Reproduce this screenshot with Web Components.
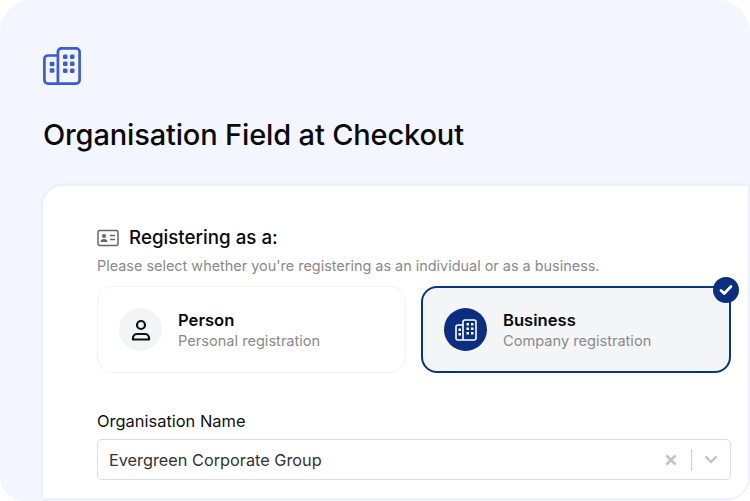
<!DOCTYPE html>
<html><head><meta charset="utf-8"><style>
html,body{margin:0;padding:0;background:#fff;width:750px;height:501px;overflow:hidden}
body{font-family:Inter,"Liberation Sans",sans-serif}
</style></head><body>
<checkout-panel>
  <svg slot="logo" width="38" height="38" viewBox="0 0 38 38" fill="none" stroke="#3b5bdb" stroke-width="2.700" stroke-linejoin="round"><path d="M15 8.500H5a3.600 3.600 0 0 0-3.600 3.600v20.900a3.600 3.600 0 0 0 3.600 3.600h28a3.600 3.600 0 0 0 3.600-3.600V5a3.600 3.600 0 0 0-3.600-3.600H18.500a3.600 3.600 0 0 0-3.600 3.600v31.600"/><g fill="#3b5bdb" stroke="none"><rect x="6.700" y="14.700" width="4.700" height="4.500" rx="1.200"/><rect x="6.700" y="21.300" width="4.700" height="4.500" rx="1.200"/><rect x="20" y="7.500" width="4.500" height="4.500" rx="1.200"/><rect x="27" y="7.500" width="4.500" height="4.500" rx="1.200"/><rect x="20" y="14.500" width="4.500" height="4.500" rx="1.200"/><rect x="27" y="14.500" width="4.500" height="4.500" rx="1.200"/><rect x="20" y="21.500" width="4.500" height="4.500" rx="1.200"/><rect x="27" y="21.500" width="4.500" height="4.500" rx="1.200"/></g></svg>
  <span slot="title">Organisation Field at Checkout</span>
  <registration-form></registration-form>
</checkout-panel>
<script>
const def=(n,html)=>customElements.define(n,class extends HTMLElement{constructor(){super();this.attachShadow({mode:'open'}).innerHTML=html(this)}});
def('checkout-panel',()=>`<style>
:host{display:flex;flex-direction:column;box-sizing:border-box;width:750px;height:501px;background:#f3f6ff;border-radius:32px 32px 24px 24px;padding:47px 2px 3px 43px;overflow:hidden}
.logo{height:38px;display:flex}
h1{margin:30px 0 0;font:500 29px/40px Inter,sans-serif;color:#0a0a0a;letter-spacing:-.15px}
.body{margin-top:31px;flex:1;display:flex;min-height:0}
</style><div class="logo"><slot name="logo"></slot></div><h1><slot name="title"></slot></h1><div class="body"><slot></slot></div>`);
def('registration-form',()=>`<style>
:host{display:block;flex:1;background:#fff;border-radius:20px 0 20px 0;box-shadow:0 0 6px rgba(60,80,160,.08);padding:41px 17px 0 54px;box-sizing:border-box}
.head{display:flex;align-items:center;gap:11px;height:22px}
h2{margin:0;font:500 18.750px/22px Inter,sans-serif;color:#0a0a0a;position:relative;left:-1px}
p{margin:8px 0 0;font:400 14.430px/18px Inter,sans-serif;color:#8a8a8a}
.cards{display:grid;grid-template-columns:309px 310px;gap:15px;margin-top:11px}
label{display:block;margin-top:38px;font:400 16.450px/20px Inter,sans-serif;color:#111}
</style><div class="head"><svg width="22" height="18" viewBox="0 0 22 18" fill="none"><rect x="1" y="1.500" width="20" height="15" rx="2" stroke="#666" stroke-width="1.500"/><circle cx="7" cy="7" r="2" fill="#666"/><path d="M3.500 13c0-2 1.500-3 3.500-3s3.500 1 3.500 3z" fill="#666"/><path d="M13 6.500h5M13 10.500h5" stroke="#666" stroke-width="1.500"/></svg><h2>Registering as a:</h2></div>
<p>Please select whether you're registering as an individual or as a business.</p>
<div class="cards"><choice-card name="Person" sub="Personal registration"></choice-card><choice-card selected name="Business" sub="Company registration"></choice-card></div>
<label>Organisation Name</label><select-field value="Evergreen Corporate Group"></select-field>`);
const person=`<svg width="24" height="24" viewBox="0 0 24 24" fill="none" stroke="#111" stroke-width="2.200"><circle cx="12" cy="7" r="4"/><path d="M4 21.500v-1.500a4 4 0 0 1 4-4h8a4 4 0 0 1 4 4v1.500z" stroke-linejoin="round"/></svg>`;
const biz=`<svg width="24" height="24" viewBox="0 0 24 24" fill="none" stroke="#fff" stroke-width="1.600" stroke-linejoin="round"><path d="M9 7H4a2 2 0 0 0-2 2v11a2 2 0 0 0 2 2h16a2 2 0 0 0 2-2V4a2 2 0 0 0-2-2h-9a2 2 0 0 0-2 2v18"/><g fill="#fff" stroke="none"><rect x="4.500" y="10.500" width="2.500" height="2.500"/><rect x="4.500" y="15" width="2.500" height="2.500"/><rect x="12.500" y="5" width="2.500" height="2.500"/><rect x="17" y="5" width="2.500" height="2.500"/><rect x="12.500" y="9.500" width="2.500" height="2.500"/><rect x="17" y="9.500" width="2.500" height="2.500"/><rect x="12.500" y="14" width="2.500" height="2.500"/><rect x="17" y="14" width="2.500" height="2.500"/></g></svg>`;
customElements.define('choice-card',class extends HTMLElement{constructor(){super();const s=this.hasAttribute('selected');this.attachShadow({mode:'open'}).innerHTML=`<style>
:host{display:flex;position:relative;box-sizing:border-box;height:87px;align-items:center;gap:16px;padding:0 21px;border-radius:16px;background:${s?'#f4f5f7':'#fff'};border:${s?'2px solid #0a3480':'1px solid #f2f3f6'}}
.ic{width:43px;height:43px;border-radius:50%;display:flex;align-items:center;justify-content:center;background:${s?'#0a2f80':'#f3f4f6'}}
b{display:block;font:600 16.600px/20px Inter,sans-serif;color:#0a0a0a}
span{display:block;margin-top:1px;font:400 14.600px/20px Inter,sans-serif;color:#8a8a8a}
.t{position:relative;top:1px}
.chk{position:absolute;top:-11px;right:-10px;width:26px;height:26px;border-radius:50%;background:#0a2f80;display:flex;align-items:center;justify-content:center}
</style><div class="ic">${s?biz:person}</div><div class="t"><b>${this.getAttribute('name')}</b><span>${this.getAttribute('sub')}</span></div>${s?'<div class="chk"><svg width="14" height="12" viewBox="0 0 14 12" fill="none" stroke="#fff" stroke-width="2.800" stroke-linecap="round" stroke-linejoin="round"><path d="M2 6.500l3.200 3L12 2.500"/></svg></div>':''}`}});
customElements.define('select-field',class extends HTMLElement{constructor(){super();this.attachShadow({mode:'open'}).innerHTML=`<style>
:host{display:flex;box-sizing:border-box;height:41px;margin-top:8px;align-items:center;border:1px solid #dcdcdc;border-radius:5px;padding:0 11px 0 11px;background:#fff}
.v{flex:1;font:400 16.300px/20px Inter,sans-serif;color:#333}
.sep{width:1px;height:22px;background:#ccc;margin:0 12px 0 14px}
</style><div class="v">${this.getAttribute('value')}</div><svg width="12" height="12" viewBox="0 0 12 12" stroke="#c4c4c4" stroke-width="2.600" fill="none"><path d="M1.500 1.500l9 9M10.500 1.500l-9 9"/></svg><div class="sep"></div><svg width="14" height="9" viewBox="0 0 14 9" stroke="#c4c4c4" stroke-width="2.400" fill="none"><path d="M1.500 1.500L7 7l5.500-5.500"/></svg><div style="width:1px"></div>`}});
</script></body></html>
